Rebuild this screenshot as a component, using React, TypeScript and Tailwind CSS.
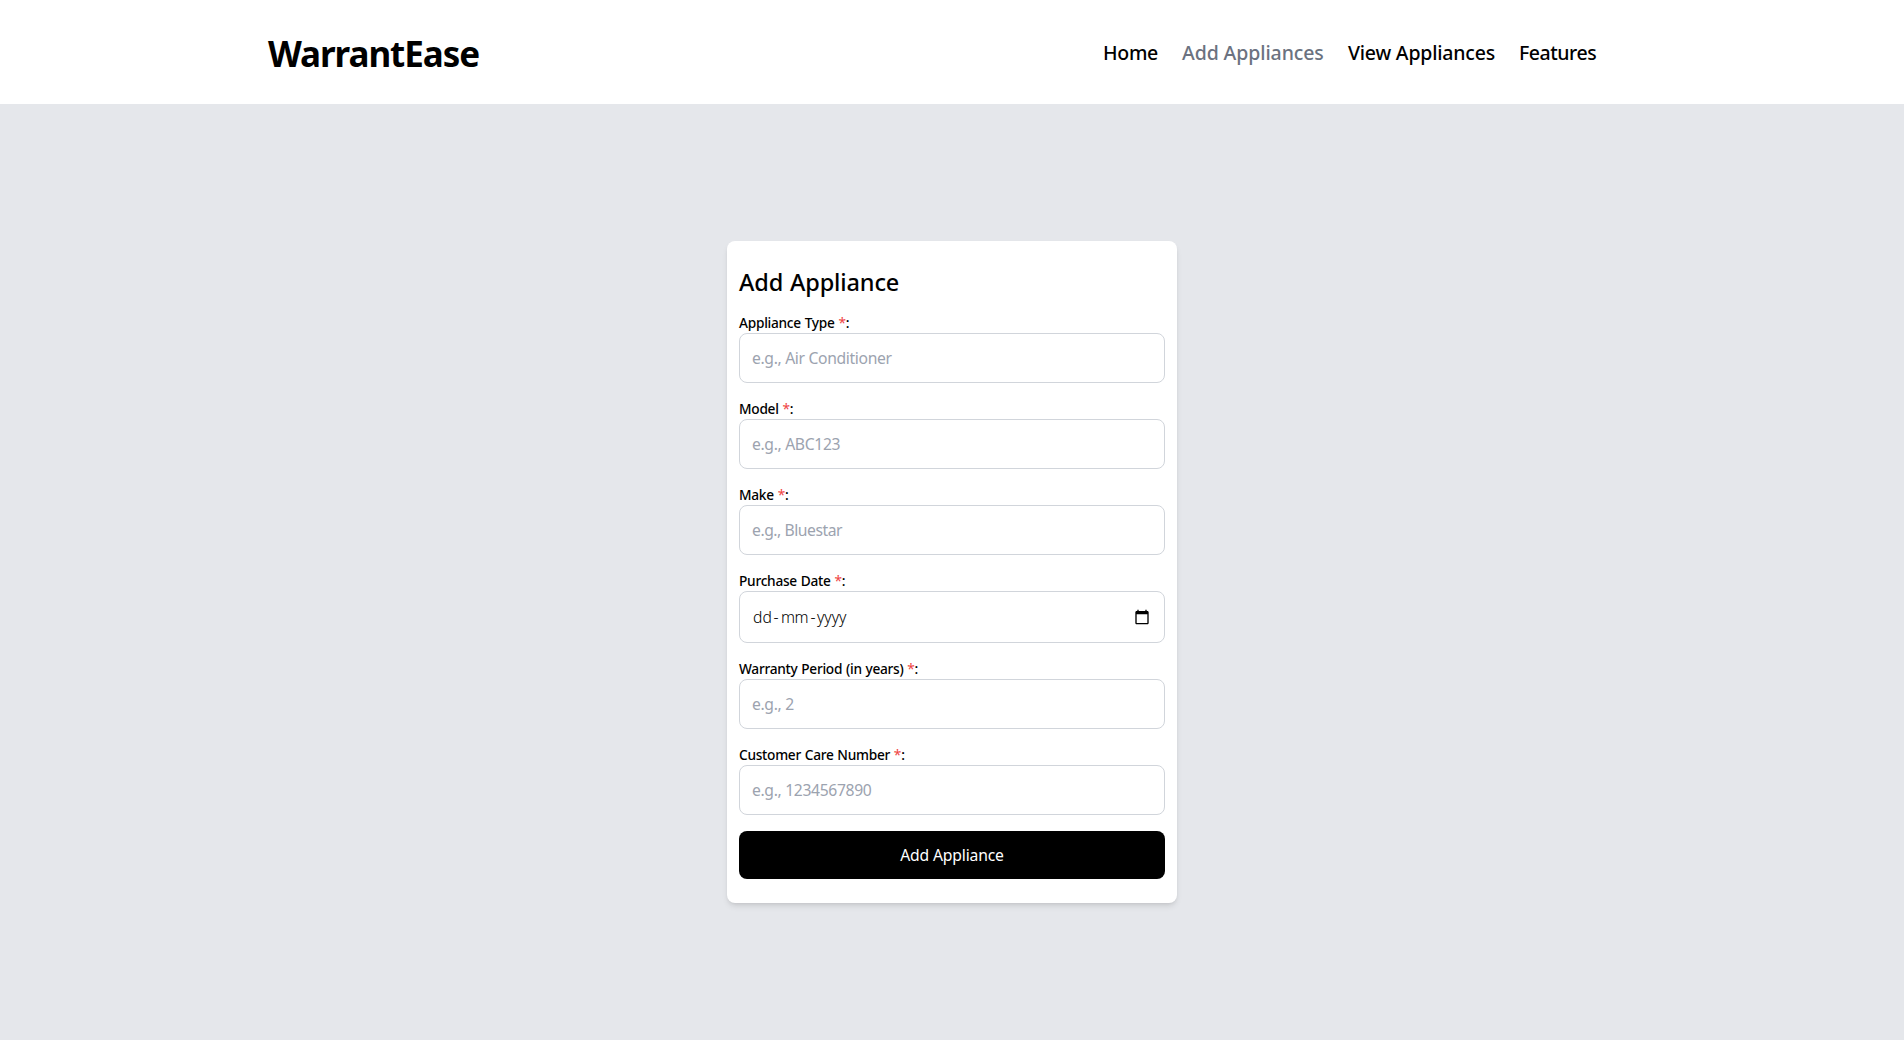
type FieldProps = { label: string; placeholder: string; tracking?: string };

function Label({ text }: { text: string }) {
  return (
    <span className="block h-5 text-[13.7px] leading-5 font-medium tracking-[-0.27px] [word-spacing:0.5px] text-black">
      {text} <span className="font-normal text-[#ef4444]">*</span>:
    </span>
  );
}

function Field({ label, placeholder, tracking = "tracking-[-0.34px]" }: FieldProps) {
  return (
    <label className="block">
      <Label text={label} />
      <input
        type="text"
        placeholder={placeholder}
        className={`block h-[50px] w-full rounded-lg border border-[#d1d5db] bg-white px-3 text-[15.7px] text-black outline-none placeholder:text-[#9ca3af] ${tracking}`}
      />
    </label>
  );
}

function DateField() {
  return (
    <div>
      <Label text="Purchase Date" />
      <div className="flex h-[52px] items-center justify-between rounded-lg border border-[#d1d5db] pr-3.5 pl-3 text-base text-black">
        <div className="flex text-[15.7px] leading-6 font-light">
          <span className="w-5 pl-px">dd</span>
          <span className="w-2 text-center">-</span>
          <span className="w-[29px] text-center tracking-[-0.6px]">mm</span>
          <span className="w-2 text-center">-</span>
          <span>yyyy</span>
        </div>
        <svg viewBox="0 0 24 24" className="size-4 fill-black">
          <path d="M20 3h-1V1h-2v2H7V1H5v2H4c-1.1 0-2 .9-2 2v16c0 1.1.9 2 2 2h16c1.1 0 2-.9 2-2V5c0-1.1-.9-2-2-2zm0 18H4V8h16v13z" />
        </svg>
      </div>
    </div>
  );
}

export default function App() {
  return (
    <div className="flex h-screen flex-col bg-[#e5e7eb] font-['Noto_Sans',sans-serif]">
      <header className="flex h-[104px] items-center justify-between bg-white pr-[307px] pl-[268px]">
        <h1 className="pt-1 text-[35px] leading-10 font-bold tracking-[-1.05px] text-black">WarrantEase</h1>
        <nav className="flex gap-6 pt-0.5 text-[19.5px] leading-7 font-medium whitespace-nowrap text-black">
          <a className="w-14 pl-px tracking-[-0.3px]">Home</a>
          <a className="w-[142px] tracking-[-0.1px] text-[#6b7280]">Add Appliances</a>
          <a className="w-[147px] tracking-[-0.2px]">View Appliances</a>
          <a className="w-[78px] tracking-[-0.45px]">Features</a>
        </nav>
      </header>
      <main className="flex flex-1 items-center justify-center">
        <form className="w-[450px] rounded-lg bg-white px-3 py-6 shadow-md">
          <h2 className="mb-[15px] pt-px text-[23.5px] leading-8 font-medium tracking-[-0.15px] text-black [word-spacing:1px]">Add Appliance</h2>
          <div className="flex flex-col gap-4">
            <Field label="Appliance Type" placeholder="e.g., Air Conditioner" />
            <Field label="Model" placeholder="e.g., ABC123" />
            <Field label="Make" placeholder="e.g., Bluestar" tracking="tracking-[-0.45px]" />
            <DateField />
            <Field label="Warranty Period (in years)" placeholder="e.g., 2" />
            <Field label="Customer Care Number" placeholder="e.g., 1234567890" />
            <button type="button" className="h-12 w-full rounded-lg bg-black text-[15.7px] leading-6 tracking-[-0.17px] text-white">
              Add Appliance
            </button>
          </div>
        </form>
      </main>
    </div>
  );
}
